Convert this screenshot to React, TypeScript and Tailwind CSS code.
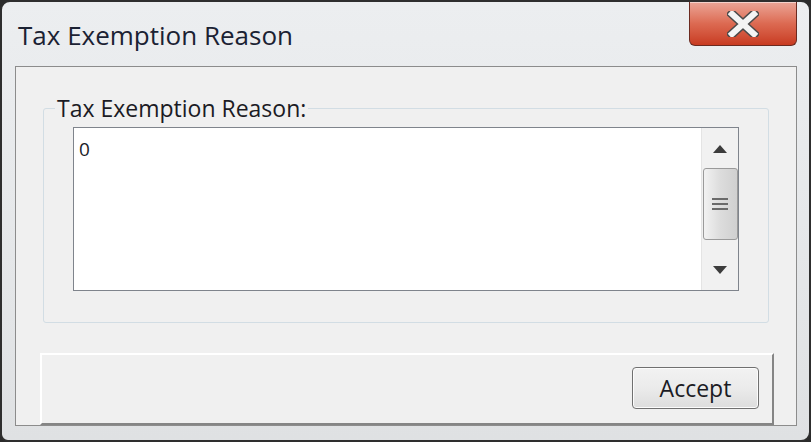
import React from "react";

const CloseGlyph = () => (
	<svg width="32" height="26" viewBox="0 0 32 26">
		<path
			d="M5 3 L27 23 M27 3 L5 23"
			stroke="#4a4a4a"
			strokeWidth="9"
			strokeLinecap="square"
			fill="none"
		/>
		<path
			d="M5 3 L27 23 M27 3 L5 23"
			stroke="#f4f4f4"
			strokeWidth="6"
			strokeLinecap="square"
			fill="none"
		/>
	</svg>
);

const ScrollBar = () => (
	<div className="w-[37px] h-full bg-[#f1f1f1] border-l border-[#e4e4e4] flex flex-col items-center">
		<div className="h-[40px] w-full flex items-center justify-center pt-[2px]">
			<svg width="14" height="8" viewBox="0 0 14 8">
				<path d="M7 0 L14 8 L0 8 Z" fill="#3c3c3c" />
			</svg>
		</div>
		<div className="w-[35px] h-[72px] rounded-[3px] border border-[#9a9a9a] bg-gradient-to-r from-[#f2f2f2] via-[#dcdcdc] to-[#d0d0d0] flex flex-col items-center justify-center gap-[3px]">
			<div className="w-[16px] h-[2px] bg-[#6a6a6a]" />
			<div className="w-[16px] h-[2px] bg-[#6a6a6a]" />
			<div className="w-[16px] h-[2px] bg-[#6a6a6a]" />
		</div>
		<div className="flex-1 w-full flex items-end justify-center pb-[16px]">
			<svg width="14" height="8" viewBox="0 0 14 8">
				<path d="M0 0 L14 0 L7 8 Z" fill="#3c3c3c" />
			</svg>
		</div>
	</div>
);

export default function App() {
	return (
		<div
			className="w-[811px] h-[442px] bg-[#2b2b2b] overflow-hidden"
			style={{ fontFamily: '"Open Sans", "Noto Sans", sans-serif' }}
		>
			<div className="w-full h-full rounded-tl-[10px] rounded-tr-[10px] rounded-bl-[8px] rounded-br-[10px] border-2 border-[#2e2e2e] bg-gradient-to-b from-[#eceef0] via-[#e6e8ea] to-[#dfe1e3] flex flex-col">
				<div className="h-[64px] flex items-start justify-between">
					<div className="pl-[16px] pt-[16px] text-[26px] leading-[34px] text-[#1b2233]">
						Tax Exemption Reason
					</div>
					<div className="mr-[12px] w-[108px] h-[44px] rounded-b-[6px] border border-t-0 border-[#6b2a20] bg-gradient-to-b from-[#eaa597] via-[#dc6a52] to-[#c83a20] flex items-center justify-center shadow-[inset_0_1px_0_rgba(255,255,255,0.5)]">
						<CloseGlyph />
					</div>
				</div>
				<div className="ml-[13px] mr-[12px] h-[360px] bg-[#f0f0f0] border border-[#8c8c8c] flex flex-col">
					<fieldset className="mt-[28px] ml-[27px] mr-[27px] border border-[#d2dde4] rounded-[3px] p-0 flex">
						<legend className="ml-[11px] px-[2px] text-[23px] leading-[26px] text-[#1b1b24]">
							Tax Exemption Reason:
						</legend>
						<div className="mx-[29px] mt-[6px] mb-[31px] flex-1 h-[164px] border border-[#7f848c] bg-white flex">
							<div className="flex-1 pl-[5px] pt-[9px] text-[19px] leading-[24px] text-[#1c1c28]">
								0
							</div>
							<ScrollBar />
						</div>
					</fieldset>
					<div className="mt-auto ml-[24px] mr-[22px] h-[72px] border-t-2 border-l-2 border-t-white border-l-white border-b-2 border-r-2 border-b-[#858585] border-r-[#858585] flex items-start justify-end pt-[12px] pr-[13px]">
						<button className="w-[127px] h-[42px] rounded-[4px] border border-[#707070] bg-gradient-to-b from-[#f2f2f2] via-[#ebebeb] to-[#dddddd] shadow-[inset_0_0_0_1px_#fcfcfc] text-[23px] leading-[26px] text-[#1b1b24]">
							Accept
						</button>
					</div>
				</div>
			</div>
		</div>
	);
}
